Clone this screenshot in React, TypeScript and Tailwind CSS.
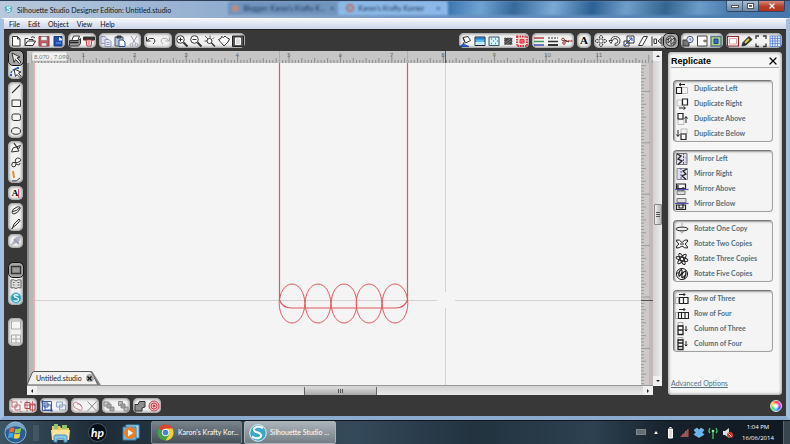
import React from "react";
import { X } from "lucide-react";

const INCH = 51.4;

/* 14 x 14 tool glyphs, stroked in currentColor unless a part sets its own paint */
const glyphs: Record<string, React.ReactNode> = {
  "New": <path d="M3.5 2.5h5l2.5 2.5v7h-7.5zM8.5 2.5v2.5h2.5" fill="#fff" />,
  "Open": <g><path d="M2 11.500v-7h3l1 1h4v2" fill="#fff" /><path d="M2 11.500l2.500-4.500h8l-2.500 4.500z" fill="#fff" /><path d="M8 3.500q2-2 4 .5" /></g>,
  "Save": <g><path d="M2 2.500h10v9.500h-10z" fill="#c8545c" stroke="#a03038" /><path d="M4 2.500h6v4h-6zM4.500 9h5v3h-5z" fill="#eee" stroke="#777" strokeWidth=".6" /></g>,
  "Save to SD": <g><path d="M3 2.500h8v9.500h-8z" fill="#1d4fb4" stroke="#173a86" /><path d="M8 3l3 2v1.500h-3z" fill="#fff" stroke="none" /><path d="M5 9h5" stroke="#7aa6ee" /></g>,
  "Print": <g><path d="M4 6l1.500-4h6l-1.500 4" fill="#fff" /><path d="M1.500 6.500h9l2-2v5l-2 2.500h-9z" fill="#999" /><path d="M2 8.500h8.500" stroke="#222" strokeWidth="1.500" /></g>,
  "Send to Silhouette": <g><path d="M1.500 3h11v3h-11z" fill="#333" /><path d="M4 6h6l-1 6h-4z" fill="#fff" stroke="#b33" /><path d="M5.500 8h3M6 10h2" stroke="#d33" /></g>,
  "Copy": <g stroke="#8d96b4"><path d="M2 2.500h4l2 2v5h-6z" fill="#dde" /><path d="M6 5.500h4l2 2v5h-6zM7.500 8.500h3M7.500 10.500h3" fill="#e6e8f2" /></g>,
  "Paste": <g><path d="M2 3h8v9h-8z" fill="#b9c4d6" stroke="#48566e" /><path d="M4 2h4v2h-4z" fill="#555" /><path d="M6 6h4l2 2v4.500h-6z" fill="#fff" stroke="#2850a0" /></g>,
  "Cut": <g stroke="#98a0b0"><path d="M4 2l4.500 7.500M10 2l-4.500 7.500" /><circle cx="4.500" cy="11" r="1.500" /><circle cx="9.500" cy="11" r="1.500" /></g>,
  "Undo": <path d="M2.500 3v4h4M2.500 7q3-4 7-2.500q3 2.500-.5 5.500" />,
  "Redo": <path d="M11.500 3v4h-4M11.500 7q-3-4-7-2.500q-3 2.500 .5 5.500" stroke="#aaa" />,
  "Zoom In": <g><circle cx="5.500" cy="5.500" r="3.800" fill="#fff" /><path d="M3.500 5.500h4M5.500 3.500v4" /><path d="M8.500 8.500l4 4" strokeWidth="2" /></g>,
  "Zoom Out": <g><circle cx="5.500" cy="5.500" r="3.800" fill="#fff" /><path d="M3.500 5.500h4" /><path d="M8.500 8.500l4 4" strokeWidth="2" /></g>,
  "Zoom Selection": <g><circle cx="6.500" cy="7" r="2.500" fill="#fff" /><path d="M8.500 9l3.500 3.500" strokeWidth="1.500" /><path d="M2 2l3 3M7 1.500v2.500M1.500 7h2.500M9.500 5l1.500-1.500" strokeWidth=".8" /></g>,
  "Pan": <path d="M1.500 5.500l2.500-1 .5-2 2 1 1.500-1.500 1.500 1.500 3 1.500-1.500 3-4 4-3-3.500z" fill="#fff" />,
  "Fit to Page": <g><path d="M1.500 2h11v10.500h-11z" fill="#555" stroke="#222" /><path d="M4.500 4h5v6.500h-5z" fill="#ddd" stroke="#fff" /></g>,
  "Fill Color": <g><path d="M4 3.500l5-1 2.500 4-5 2.500z" fill="#fff" /><path d="M4 4q3 4 0 6" /><path d="M1 12.500l4-3 2 2 3 1z" fill="#3262c2" stroke="#1d4ba8" /></g>,
  "Gradient": <g><path d="M2 3h10v8.500h-10z" fill="#5cb6ec" stroke="#223" /><path d="M2.500 8h9v3h-9z" fill="#c9ecfb" stroke="none" /><path d="M2.500 3.500h9v2h-9z" fill="#1d7fc8" stroke="none" /></g>,
  "Fill Pattern": <g><path d="M2 3h10v8.500h-10z" fill="#d3f2f7" stroke="#356" /><path d="M4 5h1M8 5h1M6 7h1M10 7h1M4 9.500h1M8 9.500h1" stroke="#2ba4b8" strokeWidth="1.500" /></g>,
  "Shadow": <g><path d="M3.500 4h7.500v6.500h-7.500z" fill="#444" stroke="#666" strokeDasharray="1.500 1" /><path d="M4 9l5-4M6 10l4-3" stroke="#999" strokeWidth=".7" /></g>,
  "Rhinestone": <g stroke="#d9343c"><path d="M2 2.500h10v9.500h-10z" fill="#fbd5d5" strokeDasharray="1.500 1" strokeWidth="1.800" /><path d="M5 5.500h4v3.500h-4z" fill="#ee6b6b" /></g>,
  "Line Color": <g strokeWidth="1.500"><path d="M2 4h10" stroke="#c03a48" /><path d="M2 7.500h10" stroke="#3a9a57" /><path d="M2 11h10" stroke="#3b4fb0" /></g>,
  "Line Style": <g><path d="M2 4h10" strokeDasharray="2 1" /><path d="M2 7.500h10" strokeWidth="1.500" /><path d="M2 11h10" strokeWidth="2" /></g>,
  "Cut Style": <g><path d="M5 7h8" stroke="#c03a3a" strokeDasharray="2 .7" strokeWidth="1.500" /><circle cx="3" cy="5.500" r="1.300" stroke="#933" /><circle cx="4" cy="9" r="1.300" stroke="#933" /><path d="M4 6l5 2" stroke="#333" /></g>,
  "Move": <path d="M7 1l2 2.500h-1v2.500h2.500v-1l2.500 2-2.500 2v-1h-2.500v2.500h1l-2 2.500-2-2.500h1v-2.500h-2.500v1l-2.500-2 2.500-2v1h2.500v-2.500h-1z" fill="#fff" strokeWidth=".8" />,
  "Rotate": <path d="M1 6.500h3.500l-1.500 3zM3 6.500q0-4 4.500-4q4.500.5 4.500 4.500q-.5 4.500-5 4.500v-2q3 0 3-2.500q-.5-2.500-3-2.500q-2 0-2.500 2" fill="#fff" strokeWidth=".9" />,
  "Scale": <g><path d="M5 2h7v7h-7zM2 7h5v5h-5z" fill="#fff" /><path d="M2 12l8-8M7 4h3v3" stroke="#2850b0" /></g>,
  "Shear": <path d="M2.500 11.500l5-9h4l-5 9z" fill="#fff" />,
  "Align": <g><path d="M2 2.500v9.500M12 2.500v9.500M4 5h2.500v4.500h-2.500z" /><path d="M11 4.500l-3 2.500 3 2.500z" /></g>,
  "Replicate Panel": <g><circle cx="7" cy="7" r="5" fill="#ccc" /><path d="M4 9q0-5 2.500-5.500q2 2-2.500 5.500M7 10.500q-1-5 3.500-6.500q1 4-3.500 6.500M3 6l2-2M9 11l2-3" /></g>,
  "Modify": <g><path d="M2 6h6v6h-6z" fill="#777" /><circle cx="9" cy="5.500" r="3.200" fill="#e4e8f4" stroke="#557" /><path d="M9 4v2h1.500" stroke="#46a" strokeWidth=".8" /></g>,
  "Offset": <g><path d="M2.500 2h9.500v10h-9.500z" fill="#fff" stroke="#444" /><path d="M8 7h4M10 5.500v3" strokeWidth=".8" /></g>,
  "Trace": <g><path d="M2 2.500h10v9.500h-10z" fill="#b5cf86" stroke="#578" strokeWidth="1.400" /><path d="M5 5h4v4.500h-4z" fill="#2a77c8" stroke="#16457a" /></g>,
  "Page": <g><path d="M1.500 2.500h11v9.500h-11z" fill="#fff" stroke="#8b2630" strokeWidth="1.200" /><path d="M3.500 4.500h7v5.500h-7z" stroke="#e6a0a0" /></g>,
  "Draw Settings": <g><path d="M2 12l1-3.500 6-6 3 3-6 5.500z" fill="#2e2e2e" /><path d="M5 9l4-4" stroke="#d9cf35" strokeWidth="2" /></g>,
  "Registration Marks": <path d="M2 5v-3h3M9 2h3v3M2 9.500v3h3M9 12.500h3v-3" strokeWidth="1.300" />,
  "Grid": <g stroke="#5b7fd0" strokeWidth=".8"><path d="M2 2h10.500v10.500h-10.500z" fill="#dfe8fb" /><path d="M4.500 2v10.500M7 2v10.500M9.500 2v10.500M2 4.500h10.500M2 7h10.500M2 9.500h10.500" /></g>,
  "Select": <path d="M3 2l8 4-3 1 4 4-1.500 1.500-4-4-1.500 3z" fill="#e4e4e4" />,
  "Edit Points": <g><path d="M2 11q-1-7 8-8" stroke="#2a5cc0" strokeDasharray="2 1" strokeWidth="1.500" /><path d="M5 4l7 3-2.500 1 2.500 3.500-1 1-3-3-1.500 2z" fill="#fff" /><path d="M1 9h2v2h-2zM8 2h2v2h-2z" fill="#2a5cc0" stroke="none" /></g>,
  "Line": <path d="M3 11l8-8" strokeWidth="1.100" />,
  "Rectangle": <path d="M3 4h8.500v6.500h-8.500z" fill="#f4f4f4" />,
  "Rounded Rectangle": <rect x="3" y="4" width="8.500" height="6.500" rx="1.800" fill="#f4f4f4" />,
  "Ellipse": <ellipse cx="7" cy="7" rx="4.500" ry="3.300" fill="#f4f4f4" />,
  "Polygon": <path d="M5 2l5 8-7.500 1 1.500-4 7.500-2.500-2 3.500z" />,
  "Curve": <path d="M3.500 7.500q-2 3 .5 4.500q3 0 3-3q-2-5 1.500-6q4 0 3 3q-2 2.500-8 1.500zM7 9q4 2 4-1" />,
  "Freehand": <g><path d="M5 9l-1-7" stroke="#ef8b2c" strokeWidth="2" /><path d="M3 12q5 1 8-3" /></g>,
  "Eraser": <g><path d="M3 9q0-3 5-5q4-1 3 2q-2 4-6 5q-2 0-2-2z" fill="#eee" /><path d="M3.500 8.500q4 0 7.500-4" /></g>,
  "Knife": <path d="M3 12l2-5 5-5q2 1 0 3l-4 4-2 1z" fill="#ddd" />,
  "Eyedropper": <g><path d="M2 11.500l5-8 5-1.500-2 5z" fill="#aeb2c4" stroke="#b7b9c6" /><path d="M5 5l5 5" stroke="#999dae" strokeWidth="2" /></g>,
  "Design View": <path d="M2.500 3.500h9v7h-9z" fill="#9a9a9a" stroke="#333" strokeWidth="1.400" />,
  "Library": <g stroke="#666"><path d="M2 3q3-1 5 1q2-2 5-1v8q-3-1-5 .5q-2-1.500-5-.5z" fill="#ddd" /><path d="M4 5.500h1.500M8.500 5.500h2M4 8h1.500M8.500 8h2" /></g>,
  "Store": <g><circle cx="7" cy="7" r="5.300" fill="#319bb5" stroke="#83cada" /><path d="M9.500 4.500q-3-1.500-4.500 0q0 1.500 2.500 2q3 1 1.500 3q-2 1.500-4.500 0" stroke="#e8fbff" strokeWidth="1.300" /></g>,
  "Single View": <path d="M2.500 3h9v8h-9z" fill="#f5f5f5" stroke="#aaa" />,
  "Split View": <path d="M2.500 3h9v8h-9zM7 3v8M2.500 7h9" fill="#f5f5f5" stroke="#aaa" />,
  "Group": <g stroke="#bd7078"><path d="M3 3h5v5h-5zM6 6h5v5h-5z" /><path d="M1.500 1.500h1.500v1.500M12.500 12.500h-1.500M12 2v2M2 12h2" /></g>,
  "Ungroup": <g stroke="#b8444f"><path d="M2 3.500h5v6h-5zM7 5h5v6h-5z" /><path d="M4 1.500v11M9.500 2v11M1 6h12" strokeWidth=".7" /></g>,
  "Select All": <g stroke="#3a5ba8"><path d="M2.500 2.500h9v9h-9zM5 6h6v5h-6zM4 4h4v4h-4z" /><path d="M1.500 1.500h2v2h-2zM10.500 10.500h2v2h-2z" fill="#27488f" stroke="none" /></g>,
  "Deselect All": <g stroke="#8da0c6"><path d="M2.500 3h6v5h-6zM5.500 6h6v5h-6z" fill="#e8edf7" /></g>,
  "Weld": <g stroke="#c58991"><path d="M2 5q2-3 5-1l4 4q1 4-3 3l-5-3zM6 5q3-1 5 2" /></g>,
  "Delete": <path d="M2.500 2.500l9 9.500M11.500 2.500l-9 9.500" stroke="#8a8a8a" />,
  "Bring Front": <g stroke="#888"><path d="M2 3h5v4h-5z" fill="#ccc" /><path d="M5 5h4v4h-4zM8 8h4v4h-4z" fill="#aaa" /></g>,
  "Send Back": <g stroke="#888"><path d="M2.500 2.500h4v4h-4zM8 8h4v4h-4z" fill="#bbb" /><path d="M5 5h4v4h-4z" fill="#999" /></g>,
  "Weld Shapes": <path d="M2 5.500h3l1.500-3h5.500v5.500l-3 1v3h-7z" fill="#8d8d8d" stroke="#333" />,
  "Offset Shapes": <g stroke="#c33d4c"><circle cx="7" cy="7" r="5" fill="#f6c9cd" /><circle cx="7" cy="7" r="3" /><circle cx="7" cy="7" r="1" fill="#c33d4c" /></g>,
  "Duplicate Left": <g><path d="M6.500 5.500h6v6h-6z" stroke="#bbb" /><path d="M1.500 5.500h5v6h-5z" fill="#fff" strokeWidth="1.200" /><path d="M4 2.500h6M6 1l-2 1.500 2 1.500" /></g>,
  "Duplicate Right": <g><path d="M2 3h5v6h-5z" stroke="#bbb" /><path d="M7.500 2h5v6h-5z" fill="#fff" strokeWidth="1.200" /><path d="M4 11h6M8.500 9.500l2 1.500-2 1.500" /></g>,
  "Duplicate Above": <g><path d="M3 7.500h6v5h-6z" stroke="#bbb" /><path d="M3 1.500h5v5.500h-5z" fill="#fff" strokeWidth="1.200" /><path d="M11 11v-6M9.500 6.500l1.500-2 1.500 2" /></g>,
  "Duplicate Below": <g><path d="M6 2h6v5h-6z" stroke="#bbb" /><path d="M6 7h5v5.500h-5z" fill="#fff" strokeWidth="1.200" /><path d="M3 3v6M1.500 7.500l1.500 2 1.500-2" /></g>,
  "Mirror Left": <g><path d="M1.500 1.500h10.500v11h-10.500z" fill="#dfdfea" stroke="#777" /><path d="M2 2l4 2-3 3 4 2-4 3.500" strokeWidth="1.300" /><path d="M8.500 1v12" stroke="#5551b5" strokeDasharray="2 1" /><path d="M10 5l2 3-2 3" stroke="#9c9ac8" /></g>,
  "Mirror Right": <g><path d="M2 1.500h10.500v11h-10.500z" fill="#dfdfea" stroke="#888" /><path d="M12 2l-4 2 3 3-4 2 4 3.500" strokeWidth="1.300" /><path d="M6 1v12" stroke="#5551b5" strokeDasharray="2 1" /></g>,
  "Mirror Above": <g><path d="M1.500 2h9v4.500h-9zM3 3v6h5v-4" strokeWidth="1.200" /><path d="M0 7.500h13.500" stroke="#5551b5" strokeWidth="1.300" /><path d="M2 9h8v3.500h-8z" fill="#ddd" stroke="#777" /></g>,
  "Mirror Below": <g><path d="M2 1.500h9v4h-9z" fill="#ddd" stroke="#777" /><path d="M0 6.500h13.500" stroke="#5551b5" strokeWidth="1.300" /><path d="M1.500 8h9v4.500h-9zM4 7.500v3.500h4v-4" strokeWidth="1.200" /></g>,
  "Rotate One Copy": <g><ellipse cx="7" cy="7" rx="6" ry="1.900" fill="#eee" /><path d="M5 9q2 4 4 0M7 1v3" stroke="#aaa" /></g>,
  "Rotate Two Copies": <path d="M1.500 3q3-1 5.500 2.500q3-3.500 5.500-2.500q1 2-2.500 4q3 2 2.500 4q-3 .5-5.500-2q-3 2.500-5.500 2q-1-2 2.500-4q-3-2-2.500-4zM5 7h4" />,
  "Rotate Three Copies": <g><ellipse cx="7" cy="7" rx="6" ry="1.800" transform="rotate(15 7 7)" /><ellipse cx="7" cy="7" rx="6" ry="1.800" transform="rotate(65 7 7)" /><ellipse cx="7" cy="7" rx="6" ry="1.800" transform="rotate(130 7 7)" /></g>,
  "Rotate Five Copies": <g><circle cx="7" cy="7" r="5.600" /><path d="M4 9.500q-1-5 2.500-7q2 3-2.500 7M7 11q-1-5 3.500-7q2 4-3.500 7M2 6l3 0M9 12l2-5" strokeWidth="1.200" /></g>,
  "Row of Three": <g><path d="M.5 5.500h3v6h-3z" stroke="#aaa" /><path d="M4.500 5.500h4v6h-4zM8.500 5.500h4.500v6h-4.500z" fill="#fff" strokeWidth="1.200" /><path d="M4 2.500h6M8.500 1l1.500 1.500-1.500 1.500" /></g>,
  "Row of Four": <g><path d="M.5 5.500h3v6h-3z" stroke="#aaa" /><path d="M3.500 5.500h3v6h-3zM6.500 5.500h3.500v6h-3.500zM10 5.500h3.500v6h-3.500z" fill="#fff" strokeWidth="1.200" /><path d="M4 2.500h6M8.500 1l1.500 1.500-1.500 1.500" /></g>,
  "Column of Three": <g><path d="M3 .5h5v3h-5z" stroke="#aaa" /><path d="M3 4h5v4h-5zM3 8h5v4.500h-5z" fill="#fff" strokeWidth="1.300" /><path d="M11 4v5M9.800 7.500l1.200 1.500 1.200-1.500" /></g>,
  "Column of Four": <g><path d="M3 .5h5v2.500h-5z" stroke="#aaa" /><path d="M3 3h5v3h-5zM3 6h5v3.500h-5zM3 9.500h5v3h-5z" fill="#fff" strokeWidth="1.300" /><path d="M11 4v5M9.800 7.500l1.200 1.500 1.200-1.500" /></g>,
};

function Glyph({ name }: { name: string }) {
  return (
    <svg viewBox="0 0 14 14" className="size-[14px] shrink-0" fill="none" stroke="currentColor" aria-hidden="true">
      {glyphs[name]}
    </svg>
  );
}

function ToolButton({ name, active }: { name: string; active?: boolean }) {
  return (
    <button
      type="button"
      aria-label={name}
      className={
        "flex size-[14px] shrink-0 items-center justify-center text-[#333] " +
        (active ? "rounded bg-[#a6a6a6] outline-1 outline-[#161616]" : "")
      }
    >
      {name === "Text Style" ? (
        <span className="font-['Liberation_Serif',serif] text-[11px] leading-none font-bold text-black">A</span>
      ) : name === "Text" ? (
        <span className="border-r border-[#e0405a] font-['Liberation_Serif',serif] text-[9px] leading-none font-bold text-black">A</span>
      ) : (
        <Glyph name={name} />
      )}
    </button>
  );
}

function ToolGroup({ tools, vertical, active }: { tools: string[]; vertical?: boolean; active?: string }) {
  return (
    <div
      role="group"
      className={
        "flex shrink-0 rounded-[5px] bg-[#f2f2f2] shadow-[inset_0_0_3px_1px_#8c8c8c] " +
        (vertical ? "w-[15px] flex-col items-center" : "h-[15px] items-center")
      }
    >
      {tools.map((t) => (
        <ToolButton key={t} name={t} active={t === active} />
      ))}
    </div>
  );
}

const topLeft = [
  ["New", "Open", "Save", "Save to SD"],
  ["Print", "Send to Silhouette"],
  ["Copy", "Paste", "Cut"],
  ["Undo", "Redo"],
  ["Zoom In", "Zoom Out", "Zoom Selection", "Pan", "Fit to Page"],
];
const topRight = [
  ["Fill Color", "Gradient", "Fill Pattern", "Shadow", "Rhinestone"],
  ["Line Color", "Line Style", "Cut Style"],
  ["Text Style"],
  ["Move", "Rotate", "Scale", "Shear", "Align", "Replicate Panel"],
  ["Modify", "Offset", "Trace"],
  ["Page", "Draw Settings", "Registration Marks", "Grid"],
];
const leftTools = [
  ["Select", "Edit Points"],
  ["Line", "Rectangle", "Rounded Rectangle", "Ellipse"],
  ["Polygon", "Curve", "Freehand"],
  ["Text"],
  ["Eraser", "Knife"],
  ["Eyedropper"],
];
const bottomTools = [
  ["Group", "Ungroup"],
  ["Select All", "Deselect All"],
  ["Weld", "Delete"],
  ["Bring Front", "Send Back"],
  ["Weld Shapes", "Offset Shapes"],
];
const replicate = [
  ["Duplicate Left", "Duplicate Right", "Duplicate Above", "Duplicate Below"],
  ["Mirror Left", "Mirror Right", "Mirror Above", "Mirror Below"],
  ["Rotate One Copy", "Rotate Two Copies", "Rotate Three Copies", "Rotate Five Copies"],
  ["Row of Three", "Row of Four", "Column of Three", "Column of Four"],
];

function TitleBar() {
  return (
    <header className="flex h-[18px] shrink-0 items-start overflow-hidden border-t border-[#2d3f58] bg-linear-to-r from-[#b9c9dd] via-[#7298c4] to-[#4478ae] pl-1">
      <div className="flex h-full items-center gap-1">
        <svg viewBox="0 0 14 14" className="size-[9px]" aria-hidden="true" fill="none">
          <path d="M1 3l6-2 6 2-1 7-5 3-5-3z" fill="#52b3cb" />
          <path d="M10 4q-4-2-5 .5q1 1.500 3 2q3 1.500 0 3.500q-2 .5-4-1" stroke="#fff" strokeWidth="1.600" />
        </svg>
        <h1 className="text-[7px] leading-[10px] whitespace-nowrap text-[#101820]">
          Silhouette Studio Designer Edition: Untitled.studio
        </h1>
      </div>
      <div className="ml-[57px] flex h-[14px] min-w-0 flex-1 items-center text-[7px] text-[#1c3556] blur-[1px]" aria-hidden="true">
        <span className="flex h-full w-[110px] shrink-0 items-center gap-1 rounded-t bg-[#7094bd] px-1 whitespace-nowrap">
          <span className="size-[7px] shrink-0 rounded-full bg-[#bd8c84]" />
          Blogger: Karon's Krafty K…
          <span className="ml-auto">×</span>
        </span>
        <span className="flex h-full w-[110px] shrink-0 items-center gap-1 rounded-t bg-[#8bb8e6] px-2 whitespace-nowrap">
          <span className="size-[8px] rounded-full border-2 border-[#b4726a]" />
          Karon's Krafty Korner
          <span className="ml-auto">×</span>
        </span>
        <span className="h-full min-w-0 flex-1 bg-[linear-gradient(100deg,#3b73ae,#6fa3d2_12%,#356899_24%,#7cabd6_38%,#2c5f92_52%,#719fcb_64%,#31648f_78%,#6d9cc8_90%,#4d7fb0)]" />
      </div>
      <div className="mr-[5px] flex h-[11px] overflow-hidden rounded-b-[3px] border border-t-0 border-[#33445c]">
        <button type="button" aria-label="Minimize" className="flex w-4 items-center justify-center border-r border-[#4a5d76] bg-linear-to-b from-[#a9bdd4] to-[#6c88a8]">
          <span className="h-[3px] w-[8px] border border-[#555] bg-white" />
        </button>
        <button type="button" aria-label="Restore" className="flex w-[15px] items-center justify-center bg-linear-to-b from-[#a9bdd4] to-[#6c88a8]">
          <span className="h-[6px] w-[7px] border border-[#555] bg-white p-px"><span className="block h-full bg-[#667]" /></span>
        </button>
        <button type="button" aria-label="Close" className="flex w-[26px] items-center justify-center border-l border-[#33445c] bg-linear-to-b from-[#d58a7a] via-[#b8402c] to-[#b0331e]">
          <X className="size-[8px] text-white" strokeWidth={4} />
        </button>
      </div>
    </header>
  );
}

function HorizontalRuler() {
  const ticks = Array.from({ length: 16 * 40 }, (_, i) => i);
  const inches = Array.from({ length: 11 }, (_, i) => i + 1);
  return (
    <svg className="block h-3 w-full" aria-hidden="true">
      <rect width="100%" height="12" fill="#c6c6c6" />
      {ticks.map((i) => (
        <path key={i} d={`M${(5 + (i * INCH) / 16).toFixed(1)} 12v${i % 16 === 0 ? -8 : i % 4 === 0 ? -5 : -3}`} stroke="#777" strokeWidth=".7" />
      ))}
      {inches.map((n) => (
        <text key={n} x={3 + n * INCH} y="6" fontSize="6" fill="#666">{n}</text>
      ))}
      <path d="M252.500 0v12M380.500 0v12" stroke="#d89a9a" />
      <path d="M418.500 0v12" stroke="#555" />
      <rect x="5" y="1" width="35" height="9" fill="#f1f1f1" stroke="#aaa" strokeWidth=".5" />
      <text x="7" y="8" fontSize="6" fill="#777">8.070 , 7.090</text>
    </svg>
  );
}

function VerticalRuler() {
  const ticks = Array.from({ length: 16 * 30 }, (_, i) => i);
  return (
    <svg className="block h-full w-3" aria-hidden="true">
      <rect width="12" height="100%" fill="#cdc9c9" />
      <rect x="8" width="4" height="100%" fill="#c2b9b9" />
      {ticks.map((i) => (
        <path key={i} d={`M0 ${(-23 + (i * INCH) / 16).toFixed(1)}h${i % 16 === 0 ? 9 : i % 4 === 0 ? 5 : 3}`} stroke="#888" strokeWidth=".7" />
      ))}
      <path d="M0 237.500h12" stroke="#555" />
    </svg>
  );
}

function Artwork() {
  return (
    <svg className="block h-full w-full" role="img" aria-label="Scalloped tag drawing" fill="none">
      <rect width="100%" height="100%" fill="#f4f4f4" />
      <rect width="6" height="100%" fill="#b9b7b7" />
      <rect width="2" height="100%" fill="#8f8f8f" />
      <path d="M7 0v2000" stroke="#e59a9a" strokeWidth="1.500" />
      <path d="M8 237.500h402M428 237.500h2000M418.500 0v229M418.500 245v2000" stroke="#d2d2d2" />
      <g stroke="#e0585e">
        <path d="M252.500 0v237q3 8 12 8h104q9 0 12-8v-237" strokeWidth="1.200" />
        {[265, 291, 317, 342, 368].map((cx) => (
          <ellipse key={cx} cx={cx} cy="240.500" rx="12.800" ry="19.500" />
        ))}
      </g>
    </svg>
  );
}

function ReplicatePanel() {
  return (
    <aside className="mt-px flex w-[114px] shrink-0 flex-col rounded-[4px] bg-[#f6f6f6] px-[3px] shadow-[inset_0_0_3px_1px_#a8a8a8]">
      <div className="flex h-4 shrink-0 items-end justify-between border-b border-[#aaa]">
        <h2 className="font-['Liberation_Sans',sans-serif] text-[9px] leading-[11px] font-bold text-black">Replicate</h2>
        <button type="button" aria-label="Close panel" className="text-black"><X className="size-[12px]" strokeWidth={2.5} /></button>
      </div>
      <div className="mt-3 flex flex-col gap-2 px-[2px]">
        {replicate.map((items) => (
          <div key={items[0]} className="flex w-[100px] flex-col rounded-[4px] border border-[#a2a2a2] border-t-[#777] border-l-[#777] bg-[#f4f4f4] shadow-[inset_1px_1px_2px_#999]">
            {items.map((item) => (
              <button key={item} type="button" className="flex h-[15px] items-center gap-[5px] pl-px text-left text-[#222]">
                <Glyph name={item} />
                <span className="text-[7px] leading-[15px] font-bold whitespace-nowrap text-[#527080]">{item}</span>
              </button>
            ))}
          </div>
        ))}
      </div>
      <a href="#advanced" className="mt-auto mb-[7px] text-[7px] leading-[10px] text-[#55707e] underline">Advanced Options</a>
    </aside>
  );
}

function DocumentArea() {
  return (
    <main className="flex min-w-0 flex-1">
      <div className="flex min-w-0 flex-1 flex-col">
        <HorizontalRuler />
        <div className="relative flex min-h-0 flex-1">
          <div className="min-w-0 flex-1 overflow-hidden"><Artwork /></div>
          <VerticalRuler />
          <div className="absolute bottom-0 left-0 h-[14px] w-[76px]">
            <svg viewBox="0 0 76 14" className="absolute inset-0 h-full w-full" aria-hidden="true">
              <path d="M62 0h3l9 14h-6z" fill="#888" />
              <path d="M0 14l5-12q1-1.500 3-1.500h54q2 0 3 1.500l6 12z" fill="#f1f1ef" stroke="#555" />
            </svg>
            <div className="relative flex h-full items-center gap-1 pl-[9px]">
              <span className="text-[7px] leading-3 text-[#222]">Untitled.studio</span>
              <button type="button" aria-label="Close document" className="flex size-[8px] items-center justify-center rounded-full bg-[#aaa] text-[#111]">
                <X className="size-[7px]" strokeWidth={4} />
              </button>
            </div>
          </div>
        </div>
        <div className="flex h-[10px] shrink-0 items-center border-t border-[#999] bg-linear-to-b from-[#d2d2d2] to-[#e9e9e9] text-[#222]">
          <button type="button" aria-label="Scroll left" className="flex h-full w-[10px] items-center justify-center bg-[#f0f0f0]">
            <span className="border-y-2 border-r-2 border-y-transparent border-r-[#222]" />
          </button>
          <div className="flex flex-1 justify-center">
            <div className="flex h-[8px] w-[73px] items-center justify-center gap-px border-x border-[#666] bg-linear-to-b from-[#dadada] to-[#aaaaae]">
              <span className="h-1 w-px bg-[#555]" /><span className="h-1 w-px bg-[#555]" /><span className="h-1 w-px bg-[#555]" />
            </div>
          </div>
          <button type="button" aria-label="Scroll right" className="flex h-full w-[10px] items-center justify-center bg-[#f0f0f0]">
            <span className="border-y-2 border-l-2 border-y-transparent border-l-[#222]" />
          </button>
        </div>
      </div>
      <div className="mb-[9px] flex w-[9px] shrink-0 flex-col items-center bg-linear-to-r from-[#d2d2d2] to-[#ececec]">
        <button type="button" aria-label="Scroll up" className="flex h-[10px] w-full items-center justify-center bg-[#f0f0f0]">
          <span className="border-x-2 border-b-2 border-x-transparent border-b-[#222]" />
        </button>
        <div className="flex w-full flex-1 flex-col items-center justify-center pb-2">
          <div className="flex h-[21px] w-[8px] flex-col items-center justify-center gap-px rounded-[1px] border border-[#888] bg-linear-to-r from-[#f0f0f0] to-[#b6b6ba]">
            <span className="h-px w-1 bg-[#555]" /><span className="h-px w-1 bg-[#555]" /><span className="h-px w-1 bg-[#555]" />
          </div>
        </div>
        <button type="button" aria-label="Scroll down" className="flex h-[10px] w-full items-center justify-center bg-[#f0f0f0]">
          <span className="border-x-2 border-t-2 border-x-transparent border-t-[#222]" />
        </button>
      </div>
    </main>
  );
}

function Taskbar() {
  return (
    <footer className="flex h-6 shrink-0 items-center overflow-hidden border-t border-[#10161d] bg-[linear-gradient(90deg,#3e5564,#1d2b36_12%,#2c3e4b_30%,#34495a_45%,#22323f_60%,#2d4150_75%,#16212b_85%,#101820)] text-white">
      <button type="button" aria-label="Start" className="ml-1 shrink-0">
        <svg viewBox="0 0 24 24" className="size-[23px]" aria-hidden="true">
          <circle cx="12" cy="12" r="11" fill="#265f94" stroke="#8fb8d6" />
          <path d="M2 10q10-9 20 0q-2-9-10-9q-8 0-10 9z" fill="#9fc4df" opacity=".7" />
          <path d="M6 8q3-2 5-.5l-1 4.500q-2-1-5 .5z" fill="#ee6a31" />
          <path d="M12 8q3 1 6-1l-1 5q-3 1.500-6 .5z" fill="#94c945" />
          <path d="M5 13q3-1.500 5 0l-1 4.500q-2-1-5 .5z" fill="#42a5e8" />
          <path d="M11 13q3 1.500 6 0l-1 4.500q-3 1.500-6 .5z" fill="#f9cf3f" />
        </svg>
      </button>
      <span className="ml-[6px] h-4 w-[6px] shrink-0 bg-[radial-gradient(#7d8b96_0.5px,transparent_1px)] bg-[length:2px_2px] opacity-40" />
      <button type="button" aria-label="File Explorer" className="ml-[11px] shrink-0">
        <svg viewBox="0 0 22 20" className="h-[20px] w-[22px]" aria-hidden="true">
          <path d="M2 3h8l1 2h8v12h-17z" fill="#e8c868" /><path d="M4 1h4v5h-4zM12 2h5v4h-5z" fill="#8fc470" />
          <path d="M1 7h19l-1 10h-17z" fill="#f6e39c" /><path d="M4 19v-5q0-2 2-2h9q2 0 2 2v5h-3v-3h-7v3z" fill="#86c4e8" stroke="#4c8fbb" />
        </svg>
      </button>
      <button type="button" aria-label="HP" className="ml-4 flex size-[19px] shrink-0 items-center justify-center rounded-full border border-[#44525e] bg-[#060c15]">
        <span className="text-[12px] leading-none font-bold italic">hp</span>
      </button>
      <button type="button" aria-label="Media Player" className="ml-[15px] shrink-0">
        <svg viewBox="0 0 18 17" className="h-[17px] w-[18px]" aria-hidden="true">
          <path d="M4 1h13v13h-13z" fill="#a9d6ee" stroke="#4d93bd" /><path d="M1 3h13v13h-13z" fill="#74b4dd" stroke="#3d7ca8" />
          <circle cx="8" cy="9" r="6" fill="#ee7d24" /><path d="M6 5.500l5 3.500-5 3.500z" fill="#fff" />
        </svg>
      </button>
      <button type="button" className="ml-[11px] flex h-full w-[91px] shrink-0 items-center gap-1 rounded-[2px] border border-[#7b858d] bg-linear-to-b from-[#78828a] to-[#444f58] pl-[5px] text-[7px] whitespace-nowrap">
        <svg viewBox="0 0 18 18" className="size-[17px] shrink-0" aria-hidden="true">
          <circle cx="9" cy="9" r="8.500" fill="#43a047" /><path d="M9 9L1.600 4.800A8.500 8.500 0 0 1 16.400 4.800z" fill="#e2402f" />
          <path d="M9 17.500A8.500 8.500 0 0 0 16.400 4.800H9L13 11z" fill="#f8cd36" />
          <circle cx="9" cy="9" r="3.900" fill="#fff" /><circle cx="9" cy="9" r="3" fill="#4285d4" />
        </svg>
        Karon's Krafty Kor...
      </button>
      <button type="button" className="ml-[2px] flex h-full w-[92px] shrink-0 items-center gap-[3px] rounded-[2px] border border-[#a9b2b9] bg-linear-to-b from-[#acb4ba] to-[#737e86] pl-[4px] text-[7px] whitespace-nowrap">
        <svg viewBox="0 0 18 18" className="size-[18px] shrink-0" aria-hidden="true" fill="none">
          <circle cx="9" cy="9" r="8.300" fill="#3ea7c4" stroke="#d9f2f8" /><path d="M14 4q-6-2.500-9 .5q-1 3 4 4q5 2 2 5q-4 2-8-1" stroke="#f4fdff" strokeWidth="2" />
        </svg>
        Silhouette Studio ...
      </button>
      <div className="ml-auto flex shrink-0 items-center">
        <svg viewBox="0 0 106 16" className="h-4 w-[106px]" aria-label="Notification icons" role="img">
          <path d="M1 4h10v6h-10z" fill="#7b868d" /><path d="M2 6h8M2 8h8" stroke="#333" strokeWidth=".6" />
          <path d="M19 9l2-3 2 3z" fill="#fff" />
          <path d="M33.500 4h4v9h-4zM34.500 2.500h2" fill="#ddd" stroke="#fff" />
          <path d="M45 12l8-8v8z" fill="#8a5252" /><path d="M48 9v3M50.500 6v6M53 4v8" stroke="#db4a44" />
          <path d="M59 5l3-2 2 2 2-2 3 2-2 2.500 2 2-5 3-5-3 2-2z" fill="#67b5f0" stroke="#b3dcfb" strokeWidth=".5" />
          <path d="M78 6v8M75 3q-2 3 0 5M81 3q2 3 0 5" stroke="#4fc65d" strokeWidth="1.300" fill="none" /><circle cx="78" cy="6" r="1.300" fill="#9be6a2" />
          <path d="M88 6h2l4-3v10l-4-3h-2z" fill="#ddd" /><circle cx="95" cy="10" r="3" fill="#d23b32" /><path d="M93.500 8.500l3 3" stroke="#fff" />
        </svg>
        <time className="w-[34px] text-center font-['Open_Sans',sans-serif] text-[6px] leading-[11px] whitespace-nowrap">1:04 PM<br />16/06/2014</time>
        <span className="ml-[8px] h-6 w-[7px] border-l border-[#5a6670] bg-[#38444e]" />
      </div>
    </footer>
  );
}

export default function App() {
  return (
    <div className="flex h-screen min-h-[444px] flex-col overflow-hidden bg-[#8fb4dc] font-['Lato','Open_Sans',sans-serif]">
      <TitleBar />
      <div className="flex min-h-0 flex-1 flex-col border-x-4 border-t border-b-4 border-x-[#a3c0e0] border-t-white border-b-[#8aaad0]">
        <nav className="flex h-[10px] shrink-0 items-center gap-[8px] bg-linear-to-b from-[#f2f5fa] to-[#ccd4e9] pl-[5px] text-[7px] leading-[10px] text-[#111]">
          {["File", "Edit", "Object", "View", "Help"].map((m) => (
            <button key={m} type="button">{m}</button>
          ))}
        </nav>
        <div className="flex h-[22px] shrink-0 items-center gap-[3px] border-t border-[#222] bg-[#383838] pr-1 pl-[5px]">
          {topLeft.map((g) => <ToolGroup key={g[0]} tools={g} />)}
          <div className="ml-auto flex gap-[3px]">
            {topRight.map((g) => <ToolGroup key={g[0]} tools={g} active="Replicate Panel" />)}
          </div>
        </div>
        <div className="flex min-h-0 flex-1 bg-[#383838] pr-1">
          <div className="flex w-[23px] shrink-0 flex-col items-center gap-[3px]">
            {leftTools.map((g) => <ToolGroup key={g[0]} tools={g} vertical active="Select" />)}
            <div className="mt-3 flex flex-col gap-[13px]">
              <ToolGroup tools={["Design View", "Library", "Store"]} vertical active="Design View" />
              <ToolGroup tools={["Single View", "Split View"]} vertical />
            </div>
          </div>
          <DocumentArea />
          <div className="w-[6px] shrink-0" />
          <ReplicatePanel />
        </div>
        <div className="flex h-[21px] shrink-0 items-center gap-[3px] bg-[#383838] pr-1 pl-[5px]">
          {bottomTools.map((g) => <ToolGroup key={g[0]} tools={g} />)}
          <button type="button" aria-label="Color wheel" className="ml-auto size-[12px] rounded-full border border-[#ddd] bg-[radial-gradient(#fff_15%,transparent_50%),conic-gradient(#f44,#f4c,#64f,#4cf,#4e6,#fe4,#f44)]" />
        </div>
      </div>
      <Taskbar />
    </div>
  );
}
